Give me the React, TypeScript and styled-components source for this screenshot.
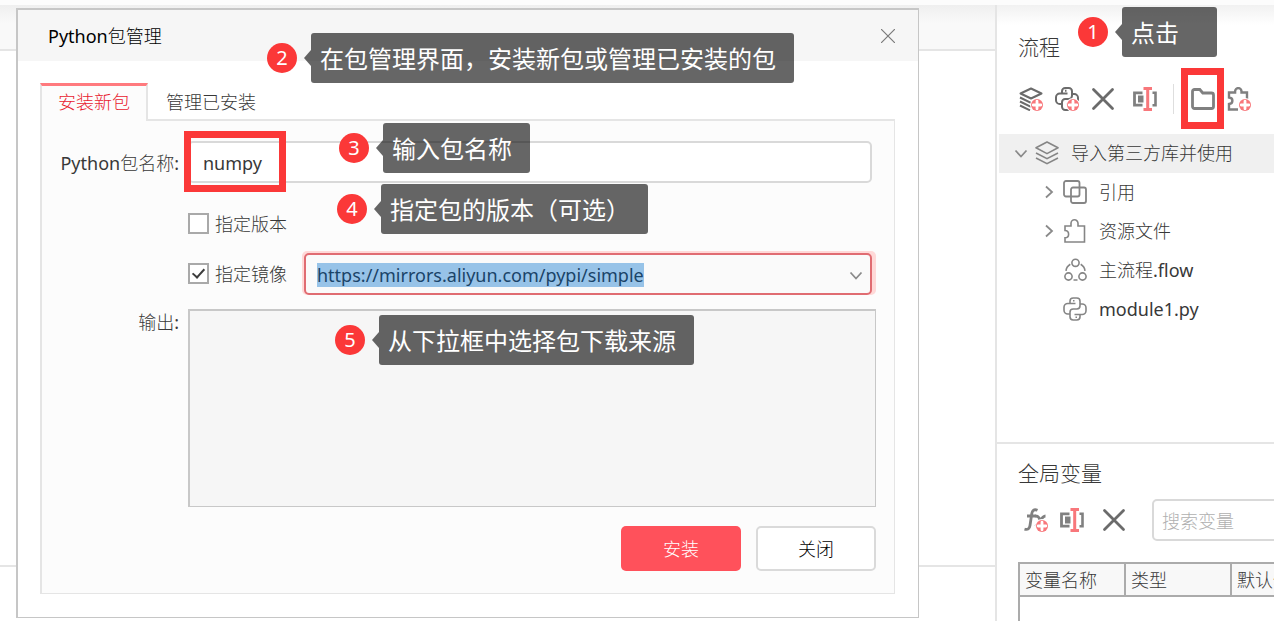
import React, { useEffect, useRef, useState } from "react";
import styled, { createGlobalStyle, css } from "styled-components";

const RED = "#fb3838";
const LINE = "#e5e5e5";

const GlobalStyle = createGlobalStyle`
  *, *::before, *::after { box-sizing: border-box; }
  body { margin: 0; background: #fff; }
  body, button, input, textarea, table {
    font-family: "Noto Sans", "Noto Sans CJK SC Light", "Noto Sans CJK SC", sans-serif;
    font-size: 18px;
    line-height: 24px;
    color: #383838;
  }
  button { margin: 0; padding: 0; border: 0; background: none; cursor: pointer; }
  svg { display: block; flex: none; }
`;

/* ---------- frame ---------- */

const Shell = styled.div`
  display: grid;
  grid-template-columns: minmax(0, 1fr) 279px;
  grid-template-rows: 5px 1fr;
  min-height: 100vh;
  overflow: hidden;
`;

const TopStrip = styled.header`
  grid-column: 1 / -1;
  background: #fcfcfc;
`;

const Workspace = styled.main`
  position: relative;
  display: flex;
  flex-direction: column;
`;

const RibbonBar = styled.div`
  height: 46px;
  border-bottom: 2px solid ${LINE};
  background: linear-gradient(#efefef, #f9f9f9 18px);
`;

const Canvas = styled.div`
  flex: 1;
`;

const OutputBar = styled.div`
  height: 56px;
  border-top: 2px solid ${LINE};
`;

/* ---------- dialog ---------- */

const Dialog = styled.section`
  position: absolute;
  top: 3px;
  left: 16px;
  right: 76px;
  background: #fff;
  border: solid #c6c6c6;
  border-width: 2px 1px 1px 2px;
`;

const DialogHeader = styled.div`
  display: flex;
  align-items: center;
  justify-content: space-between;
  height: 51px;
  padding: 0 23px 0 30px;
  background: #f6f6f6;
`;

const DialogTitle = styled.h1`
  margin: 0;
  font-size: 18px;
  font-weight: 400;
  color: #000;
`;

const DialogBody = styled.div`
  padding: 22px 23px 23px 22px;
`;

const Tabs = styled.div`
  display: flex;
  height: 36px;
`;

const Tab = styled.button<{ $active?: boolean }>`
  position: relative;
  height: 38px;
  padding: 0 16px 4px;
  border: 2px solid transparent;
  border-top-width: 3px;
  border-bottom-width: 0;
  ${(p) =>
    p.$active &&
    css`
      z-index: 1;
      color: #e8222f;
      background: #fcfcfc;
      border-color: #ff7a7e ${LINE} #fcfcfc;
    `}
`;

const Panel = styled.form`
  display: flex;
  flex-direction: column;
  padding: 20px 18px 22px 0;
  background: #fcfcfc;
  border: solid ${LINE};
  border-width: 2px 1px 1px 2px;
`;

const Row = styled.div<{ $gap?: number; $top?: boolean }>`
  display: grid;
  grid-template-columns: 137px minmax(0, 1fr);
  column-gap: 9px;
  align-items: ${(p) => (p.$top ? "start" : "center")};
  margin-bottom: ${(p) => p.$gap ?? 0}px;
`;

const Label = styled.label`
  padding-top: 1px;
  text-align: right;
  white-space: nowrap;
`;

const TextField = styled.input`
  width: 100%;
  height: 42px;
  padding: 2px 13px 0;
  background: #fff;
  border: 2px solid #d9d9d9;
  border-radius: 5px;
  outline: 0;
`;

const FieldInset = styled.div`
  display: flex;
  padding-right: 4px;
`;

const CheckLine = styled.div`
  grid-column: 2;
  display: flex;
  align-items: center;
  height: 42px;
  padding-right: 4px;
`;

const CheckLabel = styled.label`
  display: flex;
  align-items: center;
  gap: 6px;
  padding-bottom: 1px;
  white-space: nowrap;
`;

const CheckBox = styled.input`
  appearance: none;
  width: 21px;
  height: 21px;
  margin: 0;
  background: #fff;
  border: 2px solid #a9a9a9;
  display: grid;
  place-items: center;
  &:checked::before {
    content: "";
    width: 7px;
    height: 12px;
    margin-bottom: 3px;
    border: solid #3c3c3c;
    border-width: 0 2px 2px 0;
    transform: rotate(42deg);
  }
`;

const Combo = styled.div`
  flex: 1;
  display: flex;
  align-items: center;
  height: 42px;
  margin-left: 17px;
  padding: 1px 7px 0 11px;
  background: #fafafa;
  border: 2px solid #e06c72;
  border-radius: 5px;
  box-shadow: -2px -2px 0 #ffd9d8, -2px 0 0 #ffd9d8, 4px -2px 0 #ffd9d8, 4px 0 0 #ffd9d8;
`;

const ComboInput = styled.input`
  flex: 1;
  min-width: 0;
  padding: 0;
  border: 0;
  outline: 0;
  background: none;
  &::selection {
    color: #1a4468;
    background: #97c3e8;
  }
  &::-webkit-calendar-picker-indicator {
    display: none !important;
  }
`;

const Output = styled.textarea`
  display: block;
  width: 100%;
  height: 198px;
  resize: none;
  outline: 0;
  background: #f6f6f6;
  border: solid #c8c8c8;
  border-width: 2px 1px 1px 2px;
`;

const Actions = styled.div`
  display: flex;
  justify-content: flex-end;
  gap: 15px;
`;

const ActionButton = styled.button<{ $primary?: boolean }>`
  width: 120px;
  height: 45px;
  border-radius: 5px;
  color: ${(p) => (p.$primary ? "#fff" : "#000")};
  background: ${(p) => (p.$primary ? "#ff515b" : "#fff")};
  border: ${(p) => (p.$primary ? "0" : "2px solid #dadada")};
`;

/* ---------- guide marks ---------- */

const Mark = styled.div<{ $x: number; $y: number }>`
  position: absolute;
  z-index: 3;
  left: ${(p) => p.$x}px;
  top: ${(p) => p.$y}px;
  display: flex;
  align-items: center;
  gap: 14px;
`;

const MarkNumber = styled.span`
  display: grid;
  place-items: center;
  width: 30px;
  height: 30px;
  border-radius: 50%;
  background: ${RED};
  color: #fff;
  font-size: 20px;
`;

const MarkText = styled.span<{ $minWidth?: number }>`
  position: relative;
  height: 50px;
  min-width: ${(p) => p.$minWidth ?? 0}px;
  padding: 0 18px 0 9px;
  border-radius: 3px;
  background: rgba(0, 0, 0, 0.6);
  color: #fff;
  font-family: "Noto Sans", "Noto Sans CJK SC", sans-serif;
  font-size: 24px;
  line-height: 51px;
  white-space: nowrap;
  &::before {
    content: "";
    position: absolute;
    left: -7px;
    top: 17px;
    border: solid transparent;
    border-width: 8px 7px 8px 0;
    border-right-color: rgba(0, 0, 0, 0.6);
  }
`;

const RedFrame = styled.span<{ $x: number; $y: number; $w: number }>`
  position: absolute;
  z-index: 2;
  left: ${(p) => p.$x}px;
  top: ${(p) => p.$y}px;
  width: ${(p) => p.$w}px;
  height: 61px;
  border: 7px solid ${RED};
  pointer-events: none;
`;

/* ---------- side panel ---------- */

const Side = styled.aside`
  position: relative;
  display: flex;
  flex-direction: column;
  overflow: hidden;
  border-left: 2px solid ${LINE};
  background: linear-gradient(#f1f1f1, #fff 20px);
`;

const SideTitle = styled.h2`
  margin: 0;
  padding-left: 21px;
  font-size: 21px;
  line-height: 30px;
  font-weight: 400;
`;

const FlowSection = styled.section`
  padding-top: 27px;
  border-bottom: 2px solid ${LINE};
`;

const ToolRow = styled.div`
  display: flex;
  align-items: center;
  gap: 12px;
  height: 42px;
`;

const FlowTools = styled(ToolRow)`
  margin: 16px 0 14px;
  padding-left: 22px;
`;

const VarTools = styled(ToolRow)`
  margin: 11px 0 21px;
  padding-left: 27px;
`;

const IconButton = styled.button<{ $lead?: number }>`
  position: relative;
  flex: none;
  width: 24px;
  height: 24px;
  margin-left: ${(p) => p.$lead ?? 0}px;
  color: #6b6b6b;
`;

const Separator = styled.span`
  width: 1px;
  height: 30px;
  margin: 0 5px 0 4px;
  background: #dedede;
`;

const Tree = styled.ul`
  list-style: none;
  margin: 0;
  padding: 0 0 0 2px;
  min-height: 308px;
`;

const TreeRow = styled.li<{ $root?: boolean }>`
  display: flex;
  align-items: center;
  height: 39px;
  padding-left: ${(p) => (p.$root ? 14 : 42)}px;
  padding-bottom: 1px;
  background: ${(p) => (p.$root ? "#f0f0f0" : "none")};
  color: #858585;
`;

const Twisty = styled.span`
  width: 16px;
  display: flex;
  justify-content: center;
  margin-right: 6px;
`;

const TreeText = styled.span`
  margin-left: 12px;
  color: #383838;
  white-space: nowrap;
`;

const VarSection = styled.section`
  flex: 1;
  display: flex;
  flex-direction: column;
  padding-top: 14px;
`;

const SearchField = styled.input`
  flex: none;
  width: 200px;
  height: 42px;
  margin-left: 14px;
  padding: 2px 8px 0;
  background: #fff;
  border: 2px solid #d9d9d9;
  border-radius: 5px;
  &::placeholder { color: #b0b0b0; opacity: 1; }
`;

const VarTable = styled.table`
  width: 360px;
  margin-left: 21px;
  border-collapse: collapse;
  table-layout: fixed;
  th, td { border: 2px solid #ababab; padding: 0 5px; }
  th {
    height: 33px;
    background: #f8f8f8;
    font-weight: 400;
    text-align: left;
  }
  td { height: 25px; border-bottom: 0; }
  col { width: 106px; }
  col:last-child { width: auto; }
`;

/* ---------- icons ---------- */

const Svg = ({ children, w = 1.5 }: { children: React.ReactNode; w?: number }) => (
  <svg width="24" height="24" viewBox="0 0 24 24" fill="none" stroke="currentColor" strokeWidth={w} aria-hidden="true">
    {children}
  </svg>
);

const PlusDot = () => (
  <g stroke="none">
    <circle cx="18" cy="18" r="7" fill="#fff" />
    <circle cx="18" cy="18" r="6" fill="#f8777b" />
    <path d="M18 14.200v7.600M14.200 18h7.600" stroke="#fff" strokeWidth="2.800" strokeLinecap="round" />
  </g>
);

const LayersIcon = () => (
  <Svg w={1.6}>
    <path d="M12 1 23 6.800 12 12.600 1 6.800z" strokeLinejoin="round" />
    <path d="M1 12l11 5.600L23 12M1 17l11 5.600L23 17" />
  </Svg>
);

const LayersAddIcon = () => (
  <Svg w={2}>
    <path d="M12 1.500 22.500 6.500 12 11.500 1.500 6.500z" strokeLinejoin="round" />
    <path d="M1 10.500 12 15.800M1 14.500 12 19.800M1 18.500 11 23.300" />
    <PlusDot />
  </Svg>
);

const pythonPaths = (
  <>
    <path d="M12.500 6.500H4.800A3.800 3.800 0 0 0 1 10.300v2.900A3.800 3.800 0 0 0 4.800 17H7" />
    <path d="M7 6.500V4.200A3.200 3.200 0 0 1 10.200 1h3.600A3.200 3.200 0 0 1 17 4.200v4.600a3.200 3.200 0 0 1-3.200 3.200h-3.600A3.200 3.200 0 0 0 7 15.200v4.600a3.200 3.200 0 0 0 3.200 3.200h3.600a3.200 3.200 0 0 0 3.200-3.200v-2.300" />
    <path d="M11.500 17.500h7.700a3.800 3.800 0 0 0 3.800-3.800v-2.900A3.800 3.800 0 0 0 19.200 7H17" />
    <path d="M10 3.800h1.500M12.500 20.200H14" />
  </>
);

const PythonIcon = () => <Svg w={1.6}>{pythonPaths}</Svg>;

const PythonAddIcon = () => (
  <Svg w={2}>
    {pythonPaths}
    <PlusDot />
  </Svg>
);

const CrossIcon = () => (
  <Svg w={2.8}>
    <path d="M2.500 2.500l19 19M21.500 2.500l-19 19" strokeLinecap="round" />
  </Svg>
);

const RenameIcon = () => (
  <Svg w={2.8}>
    <g stroke="#808080">
      <path d="M9.500 5.800H1.500v12.400h8" />
      <path d="M19.500 5.800h3v12.400h-3" strokeWidth="2.600" />
    </g>
    <path d="M5 8.500h5.500v7H5z" fill="#808080" stroke="none" />
    <path d="M14.700 1.500v21M10.500 1.500H19M10.500 22.500H19" stroke="#f8777b" strokeWidth="3" />
  </Svg>
);

const FolderIcon = () => (
  <Svg w={2.8}>
    <path d="M1.500 4.500a2 2 0 0 1 2-2h5.300l3 3.500h8.700a2 2 0 0 1 2 2v11.500a2 2 0 0 1-2 2h-17a2 2 0 0 1-2-2z" stroke="#808080" />
  </Svg>
);

const PuzzleIcon = () => (
  <Svg w={1.6}>
    <path d="M2 7h6V4.300a3.500 3.500 0 0 1 7 0V7h6.500v16H2v-4.200c2.400 0 3.600-1.400 3.600-3.600S4.400 11.500 2 11.500z" />
  </Svg>
);

const PuzzleAddIcon = () => (
  <Svg w={2.4}>
    <path
      d="M20 12V5.500h-5.500V4.300a3.200 3.200 0 0 0-6.400 0V5.500H2v5c2.200.2 3.400 1.400 3.400 3.200S4.200 16.800 2 17v5.500h9"
      stroke="#808080"
    />
    <PlusDot />
  </Svg>
);

const RefsIcon = () => (
  <Svg w={1.8}>
    <rect x="1" y="1" width="15.500" height="15.500" rx="2" />
    <rect x="8" y="7.500" width="15" height="15.500" rx="2" />
  </Svg>
);

const FlowIcon = () => (
  <Svg w={1.6}>
    <circle cx="12.500" cy="4.800" r="3.600" />
    <circle cx="5.500" cy="18.500" r="3.600" />
    <circle cx="19.500" cy="18.500" r="3.600" />
    <path d="M7.300 6.300C5 7.700 3.300 10 3 12.800M17.700 6.300c2.300 1.400 4 3.700 4.300 6.500M10.500 22h4" />
  </Svg>
);

const FxIcon = () => (
  <Svg w={2.8}>
    <g stroke="#808080">
      <path d="M13.500 2.300C10 .8 8.300 2.500 7.800 5.500L6 17.500c-.5 3.200-2.200 4.600-5.500 3.600M3 8h9" />
      <path d="M11.500 8c3.500 0 4 2.500 5.500 7M21.500 8c-4 0-6 7-10 10.500" />
    </g>
    <PlusDot />
  </Svg>
);

const ChevronIcon = ({ right }: { right?: boolean }) => (
  <svg width="14" height="14" viewBox="0 0 14 14" fill="none" stroke="#8a8a8a" strokeWidth="1.800" aria-hidden="true">
    <path d={right ? "M4 1.500 10 7l-6 5.500" : "M1.500 4.500 7 10.500l5.500-6"} />
  </svg>
);

/* ---------- app ---------- */

const Guide = ({ n, x, y, text, minWidth }: { n: number; x: number; y: number; text: string; minWidth?: number }) => (
  <Mark $x={x} $y={y}>
    <MarkNumber>{n}</MarkNumber>
    <MarkText $minWidth={minWidth}>{text}</MarkText>
  </Mark>
);

const files = [
  { text: "引用", icon: <RefsIcon />, branch: true },
  { text: "资源文件", icon: <PuzzleIcon />, branch: true },
  { text: "主流程.flow", icon: <FlowIcon />, branch: false },
  { text: "module1.py", icon: <PythonIcon />, branch: false },
];

function PackageDialog() {
  const mirrorRef = useRef<HTMLInputElement>(null);
  const [name, setName] = useState("numpy");
  const [mirror, setMirror] = useState("https://mirrors.aliyun.com/pypi/simple");

  useEffect(() => {
    mirrorRef.current?.focus();
    mirrorRef.current?.select();
  }, []);

  return (
    <Dialog role="dialog" aria-labelledby="pkg-title">
      <DialogHeader>
        <DialogTitle id="pkg-title">Python包管理</DialogTitle>
        <button type="button" aria-label="关闭窗口">
          <svg width="14" height="14" viewBox="0 0 14 14" stroke="#7a7a7a" strokeWidth="1.200" aria-hidden="true">
            <path d="M0 0l14 14M14 0L0 14" />
          </svg>
        </button>
      </DialogHeader>
      <DialogBody>
        <Tabs role="tablist">
          <Tab type="button" role="tab" aria-selected="true" $active>安装新包</Tab>
          <Tab type="button" role="tab" aria-selected="false">管理已安装</Tab>
        </Tabs>
        <Panel onSubmit={(e) => e.preventDefault()}>
          <Row $gap={20}>
            <Label htmlFor="pkg-name">Python包名称:</Label>
            <FieldInset>
              <TextField id="pkg-name" value={name} onChange={(e) => setName(e.target.value)} />
            </FieldInset>
          </Row>
          <Row $gap={8}>
            <CheckLine>
              <CheckLabel>
                <CheckBox type="checkbox" />
                指定版本
              </CheckLabel>
            </CheckLine>
          </Row>
          <Row $gap={14}>
            <CheckLine>
              <CheckLabel>
                <CheckBox type="checkbox" defaultChecked />
                指定镜像
              </CheckLabel>
              <Combo>
                <ComboInput
                  ref={mirrorRef}
                  aria-label="镜像地址"
                  list="mirrors"
                  value={mirror}
                  onChange={(e) => setMirror(e.target.value)}
                />
                <datalist id="mirrors">
                  <option value="https://mirrors.aliyun.com/pypi/simple" />
                </datalist>
                <button type="button" aria-label="展开镜像列表">
                  <ChevronIcon />
                </button>
              </Combo>
            </CheckLine>
          </Row>
          <Row $gap={19} $top>
            <Label htmlFor="pkg-output">输出:</Label>
            <Output id="pkg-output" readOnly />
          </Row>
          <Actions>
            <ActionButton type="submit" $primary>安装</ActionButton>
            <ActionButton type="button">关闭</ActionButton>
          </Actions>
        </Panel>
      </DialogBody>
      <RedFrame $x={166} $y={121} $w={102} />
      <Guide n={2} x={249} y={23} text="在包管理界面，安装新包或管理已安装的包" />
      <Guide n={3} x={321} y={113} text="输入包名称" />
      <Guide n={4} x={319} y={174} text="指定包的版本（可选）" />
      <Guide n={5} x={317} y={305} text="从下拉框中选择包下载来源" />
    </Dialog>
  );
}

function SidePanel() {
  return (
    <Side>
      <FlowSection>
        <SideTitle>流程</SideTitle>
        <FlowTools>
          <IconButton aria-label="新建流程"><LayersAddIcon /></IconButton>
          <IconButton aria-label="新建Python模块"><PythonAddIcon /></IconButton>
          <IconButton aria-label="删除"><CrossIcon /></IconButton>
          <IconButton aria-label="重命名" $lead={6}><RenameIcon /></IconButton>
          <Separator />
          <IconButton aria-label="包管理">
            <FolderIcon />
            <RedFrame $x={-10} $y={-19} $w={43} />
          </IconButton>
          <IconButton aria-label="添加组件"><PuzzleAddIcon /></IconButton>
        </FlowTools>
        <Tree>
          <TreeRow $root>
            <Twisty><ChevronIcon /></Twisty>
            <LayersIcon />
            <TreeText>导入第三方库并使用</TreeText>
          </TreeRow>
          {files.map((f) => (
            <TreeRow key={f.text}>
              <Twisty>{f.branch && <ChevronIcon right />}</Twisty>
              {f.icon}
              <TreeText>{f.text}</TreeText>
            </TreeRow>
          ))}
        </Tree>
      </FlowSection>
      <VarSection>
        <SideTitle>全局变量</SideTitle>
        <VarTools>
          <IconButton aria-label="新建变量"><FxIcon /></IconButton>
          <IconButton aria-label="重命名变量"><RenameIcon /></IconButton>
          <IconButton aria-label="删除变量" $lead={6}><CrossIcon /></IconButton>
          <SearchField aria-label="搜索变量" placeholder="搜索变量" />
        </VarTools>
        <VarTable>
          <colgroup>
            <col />
            <col />
            <col />
          </colgroup>
          <thead>
            <tr><th>变量名称</th><th>类型</th><th>默认值</th></tr>
          </thead>
          <tbody>
            <tr><td colSpan={3} /></tr>
          </tbody>
        </VarTable>
      </VarSection>
      <Guide n={1} x={81} y={2} text="点击" minWidth={95} />
    </Side>
  );
}

export default function App() {
  return (
    <>
      <GlobalStyle />
      <Shell lang="zh-CN">
        <TopStrip />
        <Workspace>
          <RibbonBar />
          <Canvas />
          <OutputBar />
          <PackageDialog />
        </Workspace>
        <SidePanel />
      </Shell>
    </>
  );
}
